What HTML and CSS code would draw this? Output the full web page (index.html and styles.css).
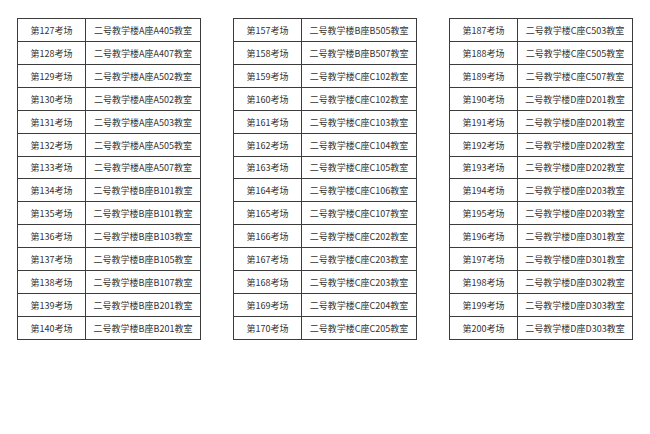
FILE: index.html
```html
<!DOCTYPE html>
<html lang="zh">
<head>
<meta charset="utf-8">
<link rel="stylesheet" href="styles.css">
</head>
<body>
<div class="sheet">
<table class="grid">
<tr><td class="c1">第127考场</td><td class="c2">二号教学楼A座A405教室</td></tr>
<tr><td class="c1">第128考场</td><td class="c2">二号教学楼A座A407教室</td></tr>
<tr><td class="c1">第129考场</td><td class="c2">二号教学楼A座A502教室</td></tr>
<tr><td class="c1">第130考场</td><td class="c2">二号教学楼A座A502教室</td></tr>
<tr><td class="c1">第131考场</td><td class="c2">二号教学楼A座A503教室</td></tr>
<tr><td class="c1">第132考场</td><td class="c2">二号教学楼A座A505教室</td></tr>
<tr><td class="c1">第133考场</td><td class="c2">二号教学楼A座A507教室</td></tr>
<tr><td class="c1">第134考场</td><td class="c2">二号教学楼B座B101教室</td></tr>
<tr><td class="c1">第135考场</td><td class="c2">二号教学楼B座B101教室</td></tr>
<tr><td class="c1">第136考场</td><td class="c2">二号教学楼B座B103教室</td></tr>
<tr><td class="c1">第137考场</td><td class="c2">二号教学楼B座B105教室</td></tr>
<tr><td class="c1">第138考场</td><td class="c2">二号教学楼B座B107教室</td></tr>
<tr><td class="c1">第139考场</td><td class="c2">二号教学楼B座B201教室</td></tr>
<tr><td class="c1">第140考场</td><td class="c2">二号教学楼B座B201教室</td></tr>
</table>
<table class="grid">
<tr><td class="c1">第157考场</td><td class="c2">二号教学楼B座B505教室</td></tr>
<tr><td class="c1">第158考场</td><td class="c2">二号教学楼B座B507教室</td></tr>
<tr><td class="c1">第159考场</td><td class="c2">二号教学楼C座C102教室</td></tr>
<tr><td class="c1">第160考场</td><td class="c2">二号教学楼C座C102教室</td></tr>
<tr><td class="c1">第161考场</td><td class="c2">二号教学楼C座C103教室</td></tr>
<tr><td class="c1">第162考场</td><td class="c2">二号教学楼C座C104教室</td></tr>
<tr><td class="c1">第163考场</td><td class="c2">二号教学楼C座C105教室</td></tr>
<tr><td class="c1">第164考场</td><td class="c2">二号教学楼C座C106教室</td></tr>
<tr><td class="c1">第165考场</td><td class="c2">二号教学楼C座C107教室</td></tr>
<tr><td class="c1">第166考场</td><td class="c2">二号教学楼C座C202教室</td></tr>
<tr><td class="c1">第167考场</td><td class="c2">二号教学楼C座C203教室</td></tr>
<tr><td class="c1">第168考场</td><td class="c2">二号教学楼C座C203教室</td></tr>
<tr><td class="c1">第169考场</td><td class="c2">二号教学楼C座C204教室</td></tr>
<tr><td class="c1">第170考场</td><td class="c2">二号教学楼C座C205教室</td></tr>
</table>
<table class="grid">
<tr><td class="c1">第187考场</td><td class="c2">二号教学楼C座C503教室</td></tr>
<tr><td class="c1">第188考场</td><td class="c2">二号教学楼C座C505教室</td></tr>
<tr><td class="c1">第189考场</td><td class="c2">二号教学楼C座C507教室</td></tr>
<tr><td class="c1">第190考场</td><td class="c2">二号教学楼D座D201教室</td></tr>
<tr><td class="c1">第191考场</td><td class="c2">二号教学楼D座D201教室</td></tr>
<tr><td class="c1">第192考场</td><td class="c2">二号教学楼D座D202教室</td></tr>
<tr><td class="c1">第193考场</td><td class="c2">二号教学楼D座D202教室</td></tr>
<tr><td class="c1">第194考场</td><td class="c2">二号教学楼D座D203教室</td></tr>
<tr><td class="c1">第195考场</td><td class="c2">二号教学楼D座D203教室</td></tr>
<tr><td class="c1">第196考场</td><td class="c2">二号教学楼D座D301教室</td></tr>
<tr><td class="c1">第197考场</td><td class="c2">二号教学楼D座D301教室</td></tr>
<tr><td class="c1">第198考场</td><td class="c2">二号教学楼D座D302教室</td></tr>
<tr><td class="c1">第199考场</td><td class="c2">二号教学楼D座D303教室</td></tr>
<tr><td class="c1">第200考场</td><td class="c2">二号教学楼D座D303教室</td></tr>
</table>
</div>
</body>
</html>
```

FILE: styles.css
```css
html, body {
  margin: 0;
  padding: 0;
  background: #ffffff;
}
.sheet {
  display: flex;
  align-items: flex-start;
  gap: 32px;
  padding: 18px 0 0 17px;
}
.grid {
  border-collapse: collapse;
  width: 184px;
  height: 322px;
  table-layout: fixed;
  font-family: "Noto Sans CJK SC", "DejaVu Sans", sans-serif;
  font-size: 9px;
  color: #333333;
  flex: none;
}
.grid td {
  border: 1px solid #3c3c3c;
  text-align: center;
  vertical-align: middle;
  padding: 1px 0 0 0;
  line-height: 1;
  white-space: nowrap;
  overflow: hidden;
}
.c1 {
  width: 67px;
}
.c2 {
  width: auto;
}
```
